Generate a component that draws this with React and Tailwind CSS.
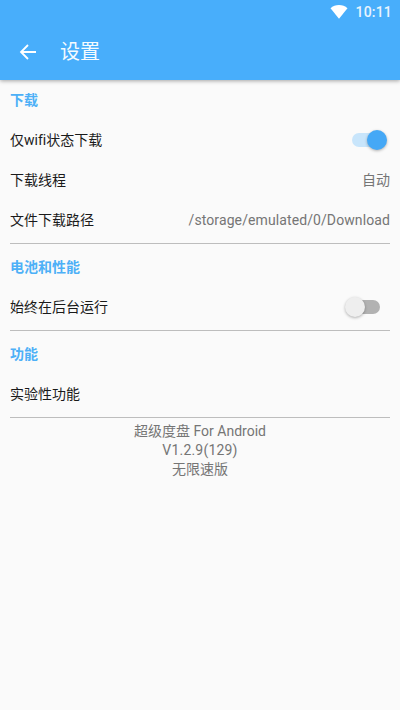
import React from "react";

const font = { fontFamily: 'Roboto, "Noto Sans CJK SC", sans-serif' };

function Section({ children, first }) {
  return (
    <div className={first ? "h-[40px] flex items-center text-[14px] font-bold text-[#4db0f7]" : "h-[43px] pt-[3px] flex items-center text-[14px] font-bold text-[#4db0f7]"}>{children}</div>
  );
}

function Row({ label, children }) {
  return (
    <div className="h-[40px] flex items-center justify-between text-[14px] text-[#1a1a1a]">
      <span>{label}</span>
      {children}
    </div>
  );
}

function Divider() {
  return <div className="h-px mt-[3px] bg-[#bdbdbd]" />;
}

export default function App() {
  return (
    <div className="w-[400px] h-[710px] bg-[#fafafa] overflow-hidden flex flex-col [font-variant-ligatures:none]" style={font}>
      <header className="h-[80px] bg-[#48aefb] text-white shadow-[0_1px_4px_rgba(0,0,0,0.35)] relative z-10 flex flex-col shrink-0">
        <div className="h-[24px] flex items-center justify-end pr-[8px] gap-[7px]">
          <svg width="18" height="14" viewBox="0 0 18 14" className="mt-[-1px]">
            <path d="M0.5 3.2C2.8 1.2 5.8 0 9 0s6.2 1.2 8.5 3.2L9 13.8z" fill="#fff" />
          </svg>
          <span className="text-[14px] font-medium text-[#e8f4fe] tracking-[0.2px]">10:11</span>
        </div>
        <div className="h-[56px] flex items-center">
          <svg width="24" height="24" viewBox="0 0 24 24" className="ml-[16px]" fill="none">
            <path d="M20 12H5M12 5l-7 7 7 7" stroke="#fff" strokeWidth="1.8" />
          </svg>
          <span className="ml-[20px] text-[20px] text-[#f5fbff]">设置</span>
        </div>
      </header>

      <main className="px-[10px] flex flex-col">
        <Section first>下载</Section>
        <Row label="仅wifi状态下载">
          <div className="relative w-[30px] h-[14px] mr-[8px] rounded-full bg-[#c8e5fb]">
            <div className="absolute right-[-5px] top-[-3px] w-[20px] h-[20px] rounded-full bg-[#45a8f6] shadow-[0_1px_3px_rgba(0,0,0,0.3)]" />
          </div>
        </Row>
        <Row label="下载线程">
          <span className="text-[14px] text-[#757575]">自动</span>
        </Row>
        <Row label="文件下载路径">
          <span className="text-[14px] text-[#757575] tracking-[0.1px]">/storage/emulated/0/Download</span>
        </Row>
        <Divider />

        <Section>电池和性能</Section>
        <Row label="始终在后台运行">
          <div className="relative w-[30px] h-[14px] mr-[10px] rounded-full bg-[#b2b2b2]">
            <div className="absolute left-[-5px] top-[-3px] w-[20px] h-[20px] rounded-full bg-[#eeeeee] shadow-[0_1px_3px_rgba(0,0,0,0.3)]" />
          </div>
        </Row>
        <Divider />

        <Section>功能</Section>
        <Row label="实验性功能" />
        <Divider />

        <div className="text-center text-[14px] leading-[19px] text-[#757575] mt-[4px]">
          <div>超级度盘 For Android</div>
          <div className="tracking-[0.2px]">V1.2.9(129)</div>
          <div>无限速版</div>
        </div>
      </main>
    </div>
  );
}
